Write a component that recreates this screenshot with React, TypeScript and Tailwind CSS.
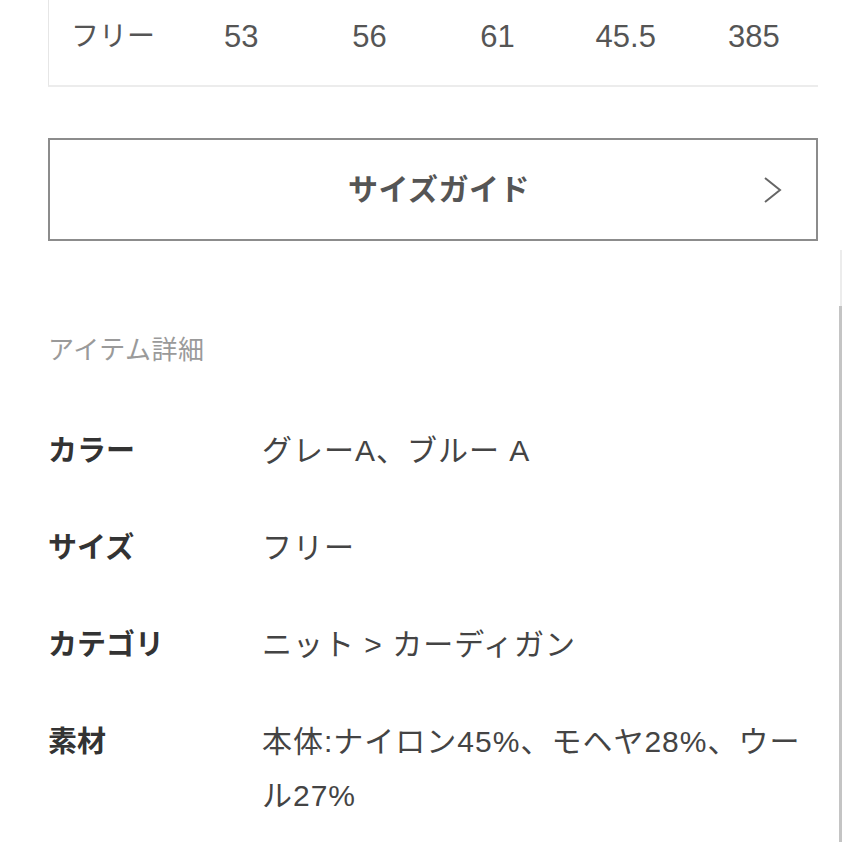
import React from "react";

// ── サイズ表の一行 ──
const SIZE_ROW = ["フリー", "53", "56", "61", "45.5", "385"];

// ── アイテム詳細 ──
const DETAILS: { label: string; value: React.ReactNode }[] = [
  { label: "カラー", value: "グレーA、ブルー A" },
  { label: "サイズ", value: "フリー" },
  { label: "カテゴリ", value: "ニット > カーディガン" },
  {
    label: "素材",
    value: (
      <>
        本体:ナイロン45%、モヘヤ28%、ウー
        <br />
        ル27%
      </>
    ),
  },
];

const FONT = "font-['Liberation_Sans','Noto_Sans_CJK_JP',sans-serif]";

export default function App() {
  return (
    <div className={`relative h-[842px] w-[842px] overflow-hidden bg-white ${FONT}`}>
      <div className="pl-[48px] pr-[24px]">
        {/* サイズ表(下端のみ) */}
        <div className="grid h-[87px] grid-cols-6 border-b-2 border-l border-b-[#ececec] border-l-[#e6e6e6] pt-[17px]">
          {SIZE_ROW.map((v, i) => (
            <div
              key={i}
              className={`text-center leading-[40px] text-[#555] ${i === 0 ? "text-[28px]" : "text-[31px]"}`}
            >
              {v}
            </div>
          ))}
        </div>

        {/* サイズガイドボタン */}
        <button className="relative mt-[51px] flex h-[103px] w-full items-center justify-center border-2 border-[#8c8c8c] bg-white pl-[12px]">
          <span className="text-[30px] font-bold tracking-[0.5px] text-[#555]">サイズガイド</span>
          <svg
            className="absolute right-[34px] top-1/2 -translate-y-1/2"
            width="19"
            height="27"
            viewBox="0 0 19 27"
            fill="none"
          >
            <polyline points="2,1.5 17,13.5 2,25.5" stroke="#666" strokeWidth="2" />
          </svg>
        </button>

        {/* アイテム詳細 */}
        <h3 className="mt-[91px] text-[26px] leading-[36px] tracking-[0.5px] text-[#9a9a9a]">
          アイテム詳細
        </h3>

        <dl className="mt-[56px] flex flex-col gap-[43px]">
          {DETAILS.map((d) => (
            <div key={d.label} className="flex">
              <dt className="w-[214px] shrink-0 text-[29px] font-bold leading-[54px] text-[#333]">
                {d.label}
              </dt>
              <dd className="whitespace-nowrap text-[30px] leading-[54px] tracking-[1px] text-[#444]">
                {d.value}
              </dd>
            </div>
          ))}
        </dl>
      </div>

      {/* スクロールバー */}
      <div className="absolute right-0 top-[250px] h-[56px] w-[2px] bg-[#ececec]" />
      <div className="absolute bottom-0 right-0 top-[306px] w-[3px] bg-[#c4c4c4]" />
    </div>
  );
}
